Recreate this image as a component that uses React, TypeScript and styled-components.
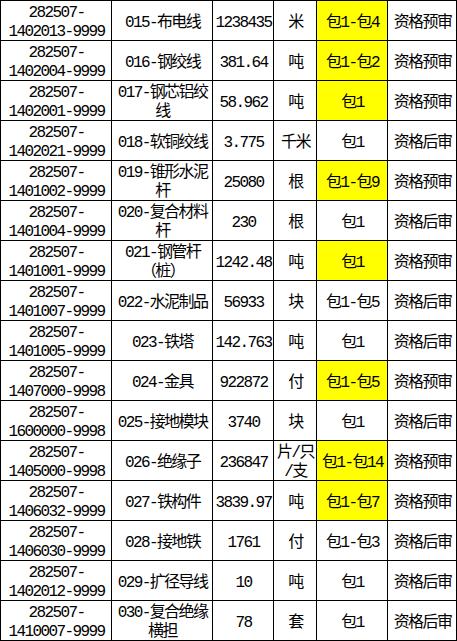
import React from 'react';
import styled, { createGlobalStyle } from 'styled-components';

const GlobalStyle = createGlobalStyle`
  html, body {
    margin: 0;
    padding: 0;
    background: #ffffff;
  }
`;

const Sheet = styled.div`
  display: grid;
  grid-template-columns: 110px 100px 60px 42px 70px 68px;
  grid-auto-rows: 39px;
  gap: 1px;
  padding: 1px;
  width: 457px;
  box-sizing: border-box;
  background: #000000;
  font-family: 'Liberation Mono', 'Noto Sans CJK SC', monospace;
  font-size: 16px;
  letter-spacing: -1.6px;
  line-height: 19px;
  color: #000000;
`;

const Cell = styled.div<{ $fill?: boolean }>`
  display: flex;
  align-items: center;
  justify-content: center;
  text-align: center;
  white-space: pre-line;
  box-sizing: border-box;
  padding: 5px 1px 0 2px;
  background: ${p => (p.$fill ? '#ffff00' : '#ffffff')};
  overflow: hidden;
`;

type Row = {
  code: string;
  name: string;
  qty: string;
  unit: string;
  pack: string;
  pre: boolean;
};

const rows: Row[] = [
  { code: '282507-1402013-9999', name: '015-布电线', qty: '1238435', unit: '米', pack: '包1-包4', pre: true },
  { code: '282507-1402004-9999', name: '016-钢绞线', qty: '381.64', unit: '吨', pack: '包1-包2', pre: true },
  { code: '282507-1402001-9999', name: '017-钢芯铝绞线', qty: '58.962', unit: '吨', pack: '包1', pre: true },
  { code: '282507-1402021-9999', name: '018-软铜绞线', qty: '3.775', unit: '千米', pack: '包1', pre: false },
  { code: '282507-1401002-9999', name: '019-锥形水泥杆', qty: '25080', unit: '根', pack: '包1-包9', pre: true },
  { code: '282507-1401004-9999', name: '020-复合材料杆', qty: '230', unit: '根', pack: '包1', pre: false },
  { code: '282507-1401001-9999', name: '021-钢管杆（桩）', qty: '1242.48', unit: '吨', pack: '包1', pre: true },
  { code: '282507-1401007-9999', name: '022-水泥制品', qty: '56933', unit: '块', pack: '包1-包5', pre: false },
  { code: '282507-1401005-9999', name: '023-铁塔', qty: '142.763', unit: '吨', pack: '包1', pre: false },
  { code: '282507-1407000-9998', name: '024-金具', qty: '922872', unit: '付', pack: '包1-包5', pre: true },
  { code: '282507-1600000-9998', name: '025-接地模块', qty: '3740', unit: '块', pack: '包1', pre: false },
  { code: '282507-1405000-9998', name: '026-绝缘子', qty: '236847', unit: '片/只\n/支', pack: '包1-包14', pre: true },
  { code: '282507-1406032-9999', name: '027-铁构件', qty: '3839.97', unit: '吨', pack: '包1-包7', pre: true },
  { code: '282507-1406030-9999', name: '028-接地铁', qty: '1761', unit: '付', pack: '包1-包3', pre: false },
  { code: '282507-1402012-9999', name: '029-扩径导线', qty: '10', unit: '吨', pack: '包1', pre: false },
  { code: '282507-1410007-9999', name: '030-复合绝缘横担', qty: '78', unit: '套', pack: '包1', pre: false }
];

// first segment of the code sits on its own line
const splitCode = (code: string) => code.replace(/^(\d+-)/, '$1\n');

export default function App() {
  return (
    <>
      <GlobalStyle />
      <Sheet>
        {rows.map(r => (
          <React.Fragment key={r.code}>
            <Cell>{splitCode(r.code)}</Cell>
            <Cell>{r.name}</Cell>
            <Cell>{r.qty}</Cell>
            <Cell>{r.unit}</Cell>
            <Cell $fill={r.pre}>{r.pack}</Cell>
            <Cell>{r.pre ? '资格预审' : '资格后审'}</Cell>
          </React.Fragment>
        ))}
      </Sheet>
    </>
  );
}
